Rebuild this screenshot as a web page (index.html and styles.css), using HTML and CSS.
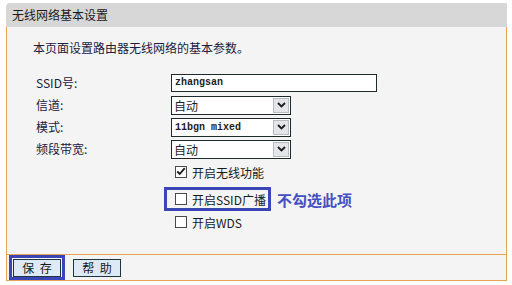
FILE: index.html
```html
<!DOCTYPE html>
<html lang="zh-CN">
<head>
<meta charset="utf-8">
<title>无线网络基本设置</title>
<link rel="stylesheet" href="styles.css">
</head>
<body>
<div class="panel">
  <div class="head">无线网络基本设置</div>
  <div class="body">
    <p class="intro">本页面设置路由器无线网络的基本参数。</p>
    <div class="form">
      <div class="label">SSID号:</div>
      <div class="input mono">zhangsan</div>
      <div class="label">信道:</div>
      <div class="select"><span class="val">自动</span><span class="arrow"><svg width="9" height="6" viewBox="0 0 9 6"><path d="M1 1 L4.5 4.5 L8 1" fill="none" stroke="#1a1a1a" stroke-width="1.8"/></svg></span></div>
      <div class="label">模式:</div>
      <div class="select"><span class="val mono">11bgn mixed</span><span class="arrow"><svg width="9" height="6" viewBox="0 0 9 6"><path d="M1 1 L4.5 4.5 L8 1" fill="none" stroke="#1a1a1a" stroke-width="1.8"/></svg></span></div>
      <div class="label">频段带宽:</div>
      <div class="select"><span class="val">自动</span><span class="arrow"><svg width="9" height="6" viewBox="0 0 9 6"><path d="M1 1 L4.5 4.5 L8 1" fill="none" stroke="#1a1a1a" stroke-width="1.8"/></svg></span></div>
    </div>
    <div class="checks">
      <div class="check first"><span class="cb"><svg width="12" height="11" viewBox="0 0 12 11"><path d="M1.5 5.5 L4.5 8.5 L10.5 1.5" fill="none" stroke="#1a1a1a" stroke-width="2.2"/></svg></span><span>开启无线功能</span></div>
      <div class="mark-row">
        <div class="check boxed"><span class="cb"></span><span>开启SSID广播</span></div>
        <span class="note">不勾选此项</span>
      </div>
      <div class="check last"><span class="cb"></span><span>开启WDS</span></div>
    </div>
  </div>
  <div class="foot">
    <div class="hl"><button class="btn" type="button">保 存</button></div>
    <button class="btn" type="button">帮 助</button>
  </div>
</div>
</body>
</html>
```
FILE: styles.css
```css
html, body {
  margin: 0;
  padding: 0;
  background: #ffffff;
}
body {
  font-family: "Noto Sans CJK SC", "Liberation Sans", sans-serif;
  font-size: 12px;
  color: #1e1e1e;
}
.panel {
  margin: 3px 0 0 6px;
  width: 501px;
}
.head {
  height: 24px;
  line-height: 24px;
  padding-left: 6px;
  background: #d7d7d7;
  border-top-left-radius: 4px;
  color: #1a1a1a;
}
.body {
  background: #f4f4f4;
  border-left: 1px solid #e6a455;
  border-right: 1px solid #e6a455;
  padding: 13px 0 23px 26px;
}
.intro {
  margin: 0;
  height: 16px;
  line-height: 16px;
  color: #1a2040;
}
.form {
  margin: 18px 0 0 3px;
  display: grid;
  grid-template-columns: 135px 206px;
  grid-auto-rows: 18px;
  row-gap: 4px;
  align-items: center;
}
.label {
  line-height: 18px;
  color: #1a2040;
}
.mono {
  font-family: "Liberation Mono", "DejaVu Sans Mono", monospace;
  font-size: 10px;
  font-weight: bold;
  color: #222;
}
.input {
  box-sizing: border-box;
  height: 18px;
  border: 1px solid #1c2a2a;
  background: #ffffff;
  line-height: 16px;
  padding-left: 3px;
}
.select {
  box-sizing: border-box;
  width: 120px;
  height: 19px;
  border: 1px solid #1c2a2a;
  background: #ffffff;
  display: flex;
  align-items: stretch;
}
.select .val {
  flex: 1;
  line-height: 17px;
  padding-left: 2px;
}
.select .val.mono {
  padding-left: 3px;
}
.select .arrow {
  width: 16px;
  margin: 1px;
  background: #e3e6e8;
  border: 1px solid #b8bcc0;
  box-sizing: border-box;
  display: flex;
  align-items: center;
  justify-content: center;
}
.checks {
  margin: 5px 0 0 138px;
}
.check {
  height: 18px;
  display: flex;
  align-items: center;
  gap: 5px;
  padding-left: 4px;
  color: #1a1a1a;
}
.cb {
  box-sizing: border-box;
  width: 12px;
  height: 12px;
  border: 1px solid #4a4a4a;
  background: #ffffff;
  display: flex;
  align-items: flex-end;
  justify-content: center;
  overflow: visible;
}
.mark-row {
  margin: 6px 0 2px -7px;
  display: flex;
  align-items: center;
  gap: 6px;
}
.check.boxed {
  border: 3px solid #3a46b6;
  padding: 0 2px 0 8px;
}
.note {
  font-size: 15px;
  font-weight: bold;
  color: #4450c2;
}
.foot {
  height: 25px;
  border: 1px solid #e6a455;
  background: #f4f4f4;
  display: flex;
  align-items: center;
  gap: 8px;
  padding-left: 2px;
}
.hl {
  box-sizing: border-box;
  height: 25px;
  width: 56px;
  border: 3px solid #3a46b6;
  display: flex;
  align-items: center;
  justify-content: center;
}
.btn {
  box-sizing: border-box;
  width: 48px;
  height: 18px;
  margin: 0;
  padding: 0;
  border: 1px solid #1e3440;
  background: #dde9f5;
  font-family: "Noto Sans CJK SC", "Liberation Sans", sans-serif;
  font-size: 12px;
  line-height: 16px;
  word-spacing: 3px;
  color: #1a1a1a;
}
```
